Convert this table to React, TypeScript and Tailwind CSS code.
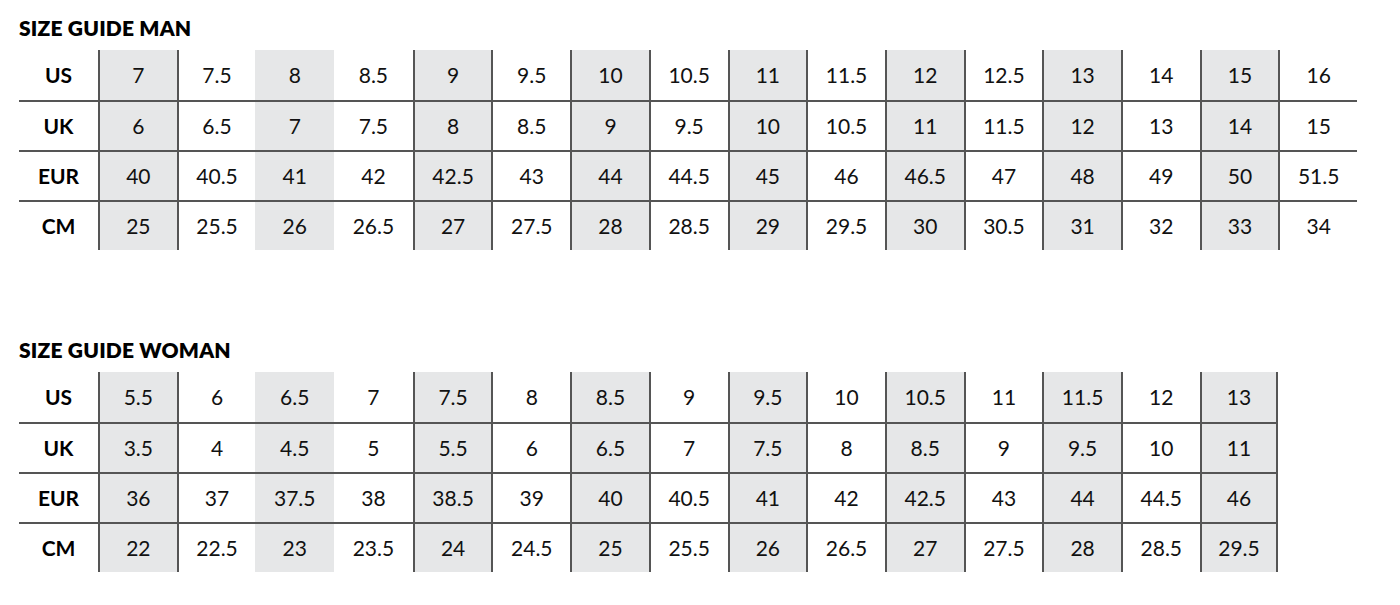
import React from "react";

type Guide = {
  title: string;
  rows: { label: string; values: string[] }[];
  closeRight: boolean;
};

const man: Guide = {
  title: "SIZE GUIDE MAN",
  closeRight: false,
  rows: [
    { label: "US", values: ["7", "7.5", "8", "8.5", "9", "9.5", "10", "10.5", "11", "11.5", "12", "12.5", "13", "14", "15", "16"] },
    { label: "UK", values: ["6", "6.5", "7", "7.5", "8", "8.5", "9", "9.5", "10", "10.5", "11", "11.5", "12", "13", "14", "15"] },
    { label: "EUR", values: ["40", "40.5", "41", "42", "42.5", "43", "44", "44.5", "45", "46", "46.5", "47", "48", "49", "50", "51.5"] },
    { label: "CM", values: ["25", "25.5", "26", "26.5", "27", "27.5", "28", "28.5", "29", "29.5", "30", "30.5", "31", "32", "33", "34"] },
  ],
};

const woman: Guide = {
  title: "SIZE GUIDE WOMAN",
  closeRight: true,
  rows: [
    { label: "US", values: ["5.5", "6", "6.5", "7", "7.5", "8", "8.5", "9", "9.5", "10", "10.5", "11", "11.5", "12", "13"] },
    { label: "UK", values: ["3.5", "4", "4.5", "5", "5.5", "6", "6.5", "7", "7.5", "8", "8.5", "9", "9.5", "10", "11"] },
    { label: "EUR", values: ["36", "37", "37.5", "38", "38.5", "39", "40", "40.5", "41", "42", "42.5", "43", "44", "44.5", "46"] },
    { label: "CM", values: ["22", "22.5", "23", "23.5", "24", "24.5", "25", "25.5", "26", "26.5", "27", "27.5", "28", "28.5", "29.5"] },
  ],
};

function SizeTable({ guide }: { guide: Guide }) {
  const cols = guide.rows[0].values.length;
  return (
    <div>
      <h2 className="text-[21px] leading-[24px] font-extrabold text-black tracking-[0.2px]">
        {guide.title}
      </h2>
      <div
        className="mt-[10px] grid"
        style={{ gridTemplateColumns: `79px repeat(${cols}, 78.7px)` }}
      >
        {guide.rows.map((row, r) => (
          <React.Fragment key={row.label}>
            <div
              className={`h-[50px] flex items-center justify-center text-[21px] font-bold text-black ${
                r > 0 ? "border-t-2 border-[#555]" : ""
              }`}
            >
              {row.label}
            </div>
            {row.values.map((v, c) => {
              const grey = c % 2 === 0;
              // the rule on either side of the third column is missing in the original
              const leftLine = c !== 2 && c !== 3;
              const rightLine = guide.closeRight && c === cols - 1;
              return (
                <div
                  key={c}
                  className={`h-[50px] flex items-center justify-center text-[21px] text-[#111] border-[#555] ${
                    grey ? "bg-[#e6e7e8]" : "bg-white"
                  } ${r > 0 ? "border-t-2" : ""} ${leftLine ? "border-l-2" : ""} ${
                    rightLine ? "border-r-2" : ""
                  }`}
                >
                  {v}
                </div>
              );
            })}
          </React.Fragment>
        ))}
      </div>
    </div>
  );
}

export default function App() {
  return (
    <div
      className="w-[1400px] h-[605px] bg-white pl-[19px] pt-[16px]"
      style={{ fontFamily: "Lato, 'Noto Sans', sans-serif" }}
    >
      <SizeTable guide={man} />
      <div className="mt-[88px]">
        <SizeTable guide={woman} />
      </div>
    </div>
  );
}
